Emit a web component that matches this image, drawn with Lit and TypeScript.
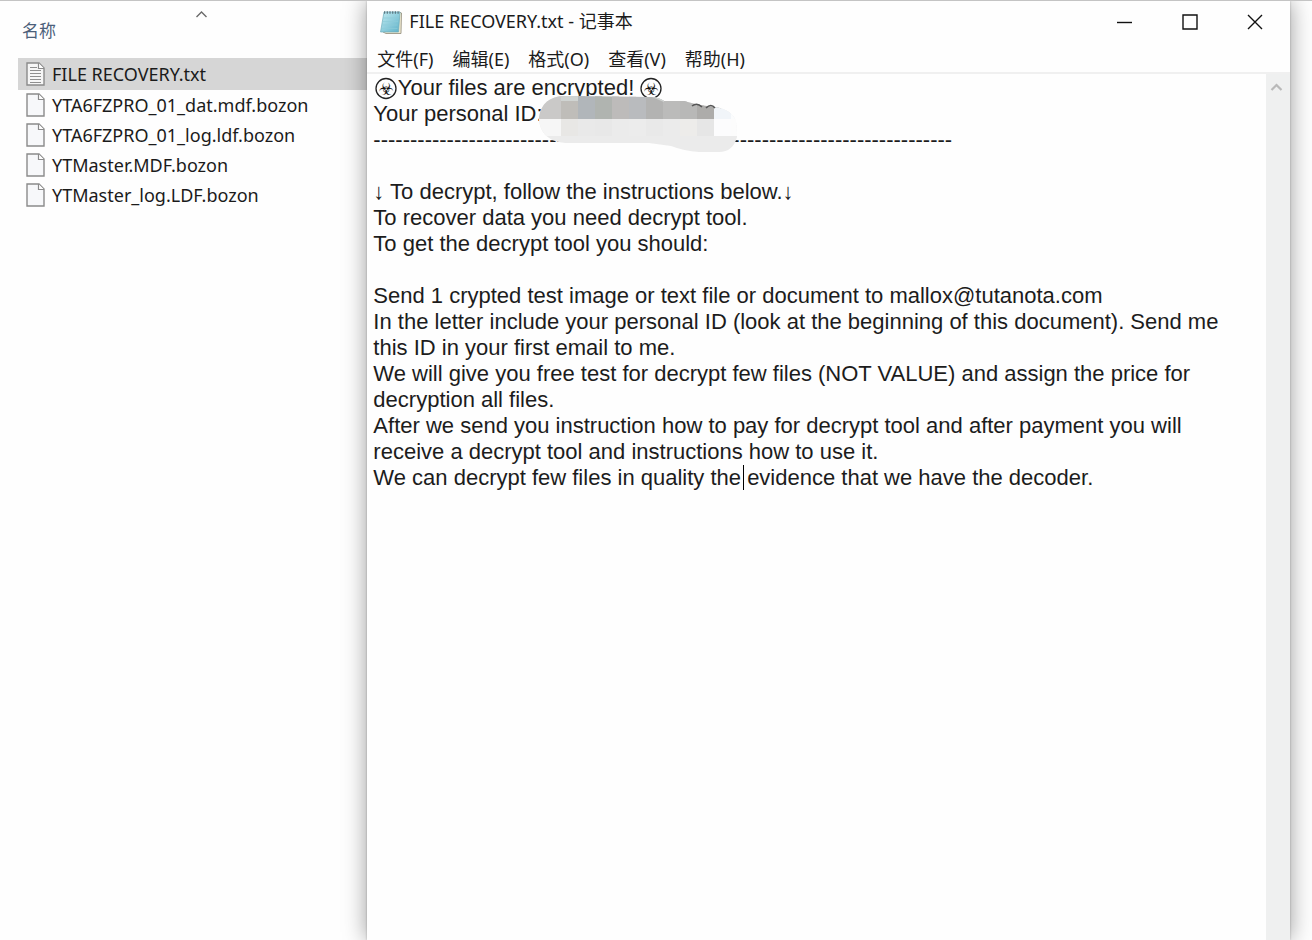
import { LitElement, html, css, svg } from "lit";
import { customElement, state } from "lit/decorators.js";

interface FileRow {
  name: string;
  text: boolean;
}

const FILES: FileRow[] = [
  { name: "FILE RECOVERY.txt", text: true },
  { name: "YTA6FZPRO_01_dat.mdf.bozon", text: false },
  { name: "YTA6FZPRO_01_log.ldf.bozon", text: false },
  { name: "YTMaster.MDF.bozon", text: false },
  { name: "YTMaster_log.LDF.bozon", text: false },
];

const MENUS = ["文件(F)", "编辑(E)", "格式(O)", "查看(V)", "帮助(H)"];

const NOTE = [
  "    Your files are encrypted!",
  "Your personal ID:",
  "-".repeat(79),
  "",
  "↓ To decrypt, follow the instructions below.↓",
  "To recover data you need decrypt tool.",
  "To get the decrypt tool you should:",
  "",
  "Send 1 crypted test image or text file or document to mallox@tutanota.com",
  "In the letter include your personal ID (look at the beginning of this document). Send me this ID in your first email to me.",
  "We will give you free test for decrypt few files (NOT VALUE) and assign the price for decryption all files.",
  "After we send you instruction how to pay for decrypt tool and after payment you will receive a decrypt tool and instructions how to use it.",
  "We can decrypt few files in quality the evidence that we have the decoder.",
].join("\n");

@customElement("file-list")
export class FileList extends LitElement {
  @state() private selected = 0;

  static styles = css`
    :host {
      display: block;
      padding: 18px 0 0 18px;
      background: #fefefe;
      position: relative;
    }
    button {
      font: inherit;
      border: 0;
      background: none;
      text-align: left;
      padding: 0;
    }
    .head {
      display: block;
      width: 100%;
      padding: 0 4px;
      height: 39px;
      color: #4c607a;
      font-size: 17px;
      line-height: 22px;
    }
    .head span {
      display: block;
      height: 38px;
    }
    .sort {
      position: absolute;
      left: 50%;
      top: 9px;
      margin-left: 11px;
    }
    ul {
      list-style: none;
      margin: 0;
      padding: 0;
    }
    .row {
      display: flex;
      align-items: center;
      gap: 7px;
      width: 100%;
      height: 30px;
      padding: 0 8px;
      font-size: 18px;
      color: #1b1b1b;
      white-space: nowrap;
    }
    .row.on {
      background: #d6d6d6;
      height: 32px;
    }
    svg {
      flex: none;
    }
  `;

  private page(f: FileRow) {
    return svg`<svg width="19" height="24" viewBox="0 0 19 24">
      <path d="M1 1H13L18 6V23H1Z" fill=${f.text ? "#f6f6f6" : "#f7f8fa"} stroke="#8b8b8b" stroke-width="1.4"/>
      <path d="M12.5 1V6.5H18" fill="#fff" stroke="#8b8b8b" stroke-width="1.2"/>
      ${f.text
        ? svg`<path d="M4 5.5H11M4 8.5H15M4 11.5H15M4 14.5H15M4 17.5H15M4 20.5H15" stroke="#8f8f8f" stroke-width="1.1"/>`
        : ""}
    </svg>`;
  }

  render() {
    return html`
      <button class="head"><span>名称</span></button>
      <svg class="sort" width="13" height="9" viewBox="0 0 13 9">
        <path d="M1.5 7L6.5 2L11.5 7" fill="none" stroke="#6a6a6a" stroke-width="1.4" />
      </svg>
      <ul>
        ${FILES.map(
          (f, i) => html`<li>
            <button class="row ${i === this.selected ? "on" : ""}" @click=${() => (this.selected = i)}>
              ${this.page(f)}<span>${f.name}</span>
            </button>
          </li>`
        )}
      </ul>
    `;
  }
}

@customElement("notepad-window")
export class NotepadWindow extends LitElement {
  static styles = css`
    :host {
      display: flex;
      flex-direction: column;
      background: #fefefe;
      position: relative;
      box-shadow: 0 0 22px rgba(0, 0, 0, 0.4), 0 0 2px rgba(0, 0, 0, 0.25);
    }
    button {
      font: inherit;
      color: inherit;
      border: 0;
      background: none;
      padding: 0;
    }
    .title {
      display: flex;
      align-items: center;
      height: 42px;
      padding: 0 3px 0 12px;
      font-size: 18px;
      color: #1b1b1b;
    }
    h1 {
      font: inherit;
      line-height: 24px;
      margin: 0 auto 0 6px;
      padding-bottom: 2px;
    }
    .ctl {
      width: 65px;
      height: 42px;
      display: grid;
      place-items: center;
    }
    .menu {
      display: flex;
      gap: 19px;
      height: 29px;
      padding: 0 10px;
      border-bottom: 2px solid #f0f0f0;
      font-size: 18px;
      color: #1b1b1b;
    }
    .body {
      display: flex;
      flex: 1;
      min-height: 0;
    }
    .sheet {
      position: relative;
      flex: 1;
      display: flex;
    }
    textarea {
      flex: 1;
      border: 0;
      outline: 0;
      resize: none;
      margin: 0;
      padding: 1px 36px 0 6px;
      background: transparent;
      color: #1c1c1c;
      font: 22px/26px "Liberation Sans", "DejaVu Sans", sans-serif;
      overflow: hidden;
    }
    .bio {
      position: absolute;
      top: 3px;
      left: 7px;
    }
    .bio text {
      font: 17px "DejaVu Sans", sans-serif;
    }
    .bio.end {
      left: 272px;
    }
    .blot {
      position: absolute;
      top: 21px;
      left: 172px;
    }
    .caret {
      position: absolute;
      top: 391px;
      left: 376px;
      width: 1px;
      height: 25px;
      background: #000;
    }
    .bar {
      width: 24px;
      background: #eff0f0;
    }
    .bar button {
      display: grid;
      place-items: center;
      width: 21px;
      height: 26px;
    }
  `;

  private bio(cls: string) {
    return html`<svg class="bio ${cls}" width="24" height="24" viewBox="0 0 24 24" aria-hidden="true">
      <circle cx="12" cy="11.5" r="10" fill="none" stroke="#222" stroke-width="1.3" />
      <text x="12" y="17.5" text-anchor="middle" fill="#111">☣</text>
    </svg>`;
  }

  private blot() {
    const top = ["#cac9c8", "#bfbdb9", "#b1b6ba", "#b0b4b0", "#bdbbba", "#b9bbbe", "#b3b3b2", "#bbbbba", "#b8b8b7", "#adacaa", "#f1f5f9", "#fbfcfd"];
    const mid = ["#f6f6f6", "#e8e7e5", "#e9e9e9", "#e8e8e8", "#ebebeb", "#ececec", "#e9e9e9", "#ebebeb", "#edecea", "#e6e6e6", "#fcfcfd", "#fcfcfc"];
    const xs = (i: number) => (i === 0 ? 0 : 5 + 17 * i);
    return html`<svg class="blot" width="200" height="60" viewBox="0 0 200 60" aria-hidden="true">
      <defs>
        <clipPath id="blob">
          <path d="M0 22C2 8 12 0 28 1L110 2Q120 2 125 6H145L160 10L176 12Q192 14 197 26L198 42Q194 57 180 57H160Q145 56 132 51L110 48H30C10 48 0 38 0 22Z" />
        </clipPath>
      </defs>
      <g clip-path="url(#blob)">
        <rect width="200" height="60" fill="#ebebeb" />
        ${top.map((c, i) => svg`<rect x=${xs(i)} y="0" width="24" height="24" fill=${c}/>`)}
        ${mid.map((c, i) => svg`<rect x=${xs(i)} y="24" width="24" height="17" fill=${c}/>`)}
        <path d="M22 0H39V6H22ZM108 0H125V7" fill="#d0d4d2" />
      </g>
      <path d="M153 11Q158 7 163 12M167 13Q172 8 176 13" fill="none" stroke="#555" stroke-width="1.6" />
    </svg>`;
  }

  render() {
    return html`
      <header class="title">
        <svg width="24" height="26" viewBox="0 0 24 26" aria-hidden="true">
          <defs>
            <linearGradient id="pad" x1="0" y1="0" x2="1" y2="1">
              <stop offset="0" stop-color="#c3ebf1" />
              <stop offset="1" stop-color="#5fb2c9" />
            </linearGradient>
          </defs>
          <path d="M20 3L22.500 4L22 24.500H7L4 23Z" fill="#efe8cf" stroke="#8f8a78" stroke-width=".8" />
          <path d="M5 3H21L19.500 23H1.500Z" fill="url(#pad)" stroke="#6faebb" stroke-width=".7" />
          <path d="M5 3.500H21" stroke="#5c7780" stroke-width="2.500" stroke-dasharray="1.200 1.500" />
          <path d="M4.500 9H19M4 12.500H19M3.500 16H18.500M3 19.500H18.500" stroke="#8ccbd8" stroke-width=".7" />
        </svg>
        <h1>FILE RECOVERY.txt - 记事本</h1>
        <button class="ctl" aria-label="最小化">
          <svg width="16" height="16" viewBox="0 0 16 16"><path d="M0 8.500H15" stroke="#111" stroke-width="1.400" /></svg>
        </button>
        <button class="ctl" aria-label="最大化">
          <svg width="16" height="16" viewBox="0 0 16 16"><path d="M1 1H15V15H1Z" fill="none" stroke="#111" stroke-width="1.400" /></svg>
        </button>
        <button class="ctl" aria-label="关闭">
          <svg width="16" height="16" viewBox="0 0 16 16"><path d="M1 1L15 15M15 1L1 15" stroke="#111" stroke-width="1.400" /></svg>
        </button>
      </header>
      <nav class="menu">${MENUS.map((m) => html`<button>${m}</button>`)}</nav>
      <div class="body">
        <div class="sheet">
          <textarea aria-label="记事本" spellcheck="false" .value=${NOTE}></textarea>
          ${this.bio("")} ${this.bio("end")} ${this.blot()}
          <span class="caret"></span>
        </div>
        <div class="bar">
          <button aria-label="向上滚动">
            <svg width="13" height="10" viewBox="0 0 13 10"><path d="M1.500 8L6.500 3L11.500 8" fill="none" stroke="#b9b9b9" stroke-width="2.200" /></svg>
          </button>
        </div>
      </div>
    `;
  }
}

@customElement("app-root")
export class AppRoot extends LitElement {
  static styles = css`
    :host {
      display: grid;
      grid-template-columns: 28% 1fr 22px;
      height: 100vh;
      box-sizing: border-box;
      border-top: 1px solid #c4c4c4;
      background: #fefefe;
      overflow: hidden;
      font-family: "Noto Sans", "Noto Sans CJK SC", sans-serif;
    }
  `;

  render() {
    return html`<file-list></file-list><notepad-window></notepad-window>`;
  }
}
